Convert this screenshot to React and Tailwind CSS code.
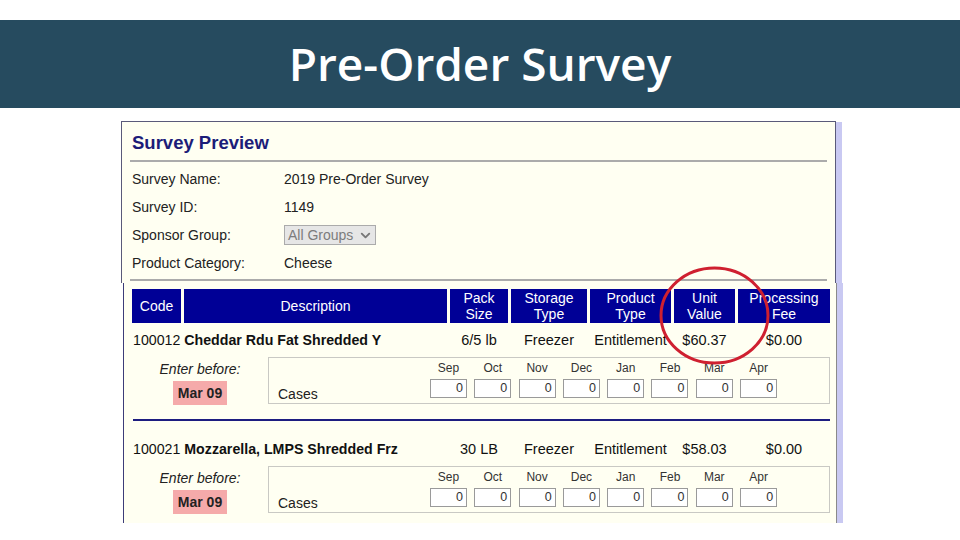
import React from 'react';
import { ChevronDown } from 'lucide-react';

const info = [
  ['Survey Name:', '2019 Pre-Order Survey'],
  ['Survey ID:', '1149'],
  ['Sponsor Group:', null],
  ['Product Category:', 'Cheese'],
];

const columns = [
  { w: 'w-[49px]', label: ['Code'] },
  { w: 'w-[263px]', label: ['Description'] },
  { w: 'w-[58px]', label: ['Pack', 'Size'] },
  { w: 'w-[76px]', label: ['Storage', 'Type'] },
  { w: 'w-[81px]', label: ['Product', 'Type'] },
  { w: 'w-[61px]', label: ['Unit', 'Value'] },
  { w: 'w-[92px]', label: ['Processing', 'Fee'] },
];

const months = ['Sep', 'Oct', 'Nov', 'Dec', 'Jan', 'Feb', 'Mar', 'Apr'];

const items = [
  { code: '100012', name: 'Cheddar Rdu Fat Shredded Y', pack: '6/5 lb', storage: 'Freezer', type: 'Entitlement', value: '$60.37', fee: '$0.00' },
  { code: '100021', name: 'Mozzarella, LMPS Shredded Frz', pack: '30 LB', storage: 'Freezer', type: 'Entitlement', value: '$58.03', fee: '$0.00' },
];

function ItemRow({ item, first }) {
  return (
    <div>
      {/* product line */}
      <div className={`flex gap-[3px] ${first ? 'pt-[9px]' : 'pt-[20px]'} pb-[9px] leading-[16px] text-[#111]`}>
        <div className="w-[315px] pl-[1px] whitespace-nowrap text-[14.2px]">
          {item.code} <span className="font-bold">{item.name}</span>
        </div>
        <div className="w-[58px] text-center text-[14.5px]">{item.pack}</div>
        <div className="w-[76px] text-center text-[14.5px]">{item.storage}</div>
        <div className="w-[81px] text-center whitespace-nowrap text-[14.5px]">{item.type}</div>
        <div className="w-[61px] text-center text-[14.5px]">{item.value}</div>
        <div className="w-[92px] text-center text-[14.5px]">{item.fee}</div>
      </div>

      {/* order quantities */}
      <div className="flex items-start">
        <div className="w-[136px] flex flex-col items-center pt-[4px]">
          <div className="italic text-[14px] leading-[16px] text-[#222]">Enter before:</div>
          <div className="mt-[4px] h-[24px] w-[54px] bg-[#f5aaaa] flex items-center justify-center font-bold text-[14px] text-[#222]">
            Mar 09
          </div>
        </div>
        <div className="w-[562px] h-[47px] border border-[#c9c9c4] flex">
          <div className="w-[161px] pl-[9px] self-end pb-[1px] text-[14px] leading-[16px] text-[#222]">Cases</div>
          <div className="flex gap-[7.3px]">
            {months.map((m) => (
              <div key={m} className="w-[37px] flex flex-col items-center">
                <div className="pt-[2px] text-[12px] leading-[16px] text-[#333]">{m}</div>
                <div className="mt-[3px] w-[37px] h-[19px] bg-white border border-[#9a9a9a] text-right pr-[3px] text-[12.5px] leading-[17px] text-[#333]">
                  0
                </div>
              </div>
            ))}
          </div>
        </div>
      </div>
    </div>
  );
}

export default function App() {
  return (
    <div className="relative w-[960px] h-[540px] bg-white overflow-hidden font-['Liberation_Sans',Arial,sans-serif]">
      <div className="pt-[20px]">
        <div className="h-[88px] bg-[#264b5f] flex items-center justify-center">
          <h1 className="font-['Open_Sans',sans-serif] font-semibold text-[46px] text-white leading-none -mt-[2px]">
            Pre-Order Survey
          </h1>
        </div>
      </div>

      {/* upper capture: survey info */}
      <div className="mt-[13px] ml-[121px] w-[722px] h-[162px] flex">
        <div className="w-[715px] bg-[#fffff2] border-l border-t border-r border-[#5a5a7a]">
          <div className="ml-[8px] w-[697px]">
            <div className="pt-[11px] pl-[2px] text-[18.5px] leading-[20px] font-bold text-[#1c1c78]">Survey Preview</div>
            <div className="mt-[7px] h-[2px] bg-[#ababab]" />
            <div className="mt-[3px] pl-[2px]">
              {info.map(([label, value]) => (
                <div key={label} className="h-[28px] flex items-center text-[14px] text-[#222]">
                  <div className="w-[152px]">{label}</div>
                  {value ? (
                    <div>{value}</div>
                  ) : (
                    <div className="w-[92px] h-[20px] bg-[#e6e6e6] border border-[#ababab] flex items-center pl-[3px] gap-[5px] text-[#7c7c7c]">
                      All Groups
                      <ChevronDown size={15} strokeWidth={3} className="text-[#777]" />
                    </div>
                  )}
                </div>
              ))}
            </div>
            <div className="mt-[2px] h-[2px] bg-[#ababab]" />
          </div>
        </div>
        <div className="mt-[1px] w-[6px] bg-[#c9c9f2]" />
      </div>

      {/* lower capture: items table */}
      <div className="ml-[123px] w-[720px] h-[240px] flex">
        <div className="w-[714px] bg-[#fffff2] border-l border-[#3c3c78] border-r-[#8a8a8a] border-r pl-[8px]">
          <div className="mt-[6px] flex gap-[3px]">
            {columns.map((c) => (
              <div key={c.label[0]} className={`${c.w} h-[34px] bg-[#000096] text-white text-[14px] leading-[16px] flex flex-col items-center justify-center`}>
                {c.label.map((l) => (
                  <span key={l}>{l}</span>
                ))}
              </div>
            ))}
          </div>
          <ItemRow item={items[0]} first />
          <div className="mt-[14px] ml-[1px] w-[697px] h-[2px] bg-[#1d1d80]" />
          <ItemRow item={items[1]} />
        </div>
        <div className="w-[6px] bg-[#c9c9f2]" />
      </div>

      {/* red highlight ring */}
      <svg className="absolute left-[658px] top-[265px]" width="114" height="102" viewBox="0 0 114 102">
        <ellipse cx="56.5" cy="50.5" rx="53.5" ry="47.5" fill="none" stroke="#cf2030" strokeWidth="3" />
      </svg>
    </div>
  );
}
